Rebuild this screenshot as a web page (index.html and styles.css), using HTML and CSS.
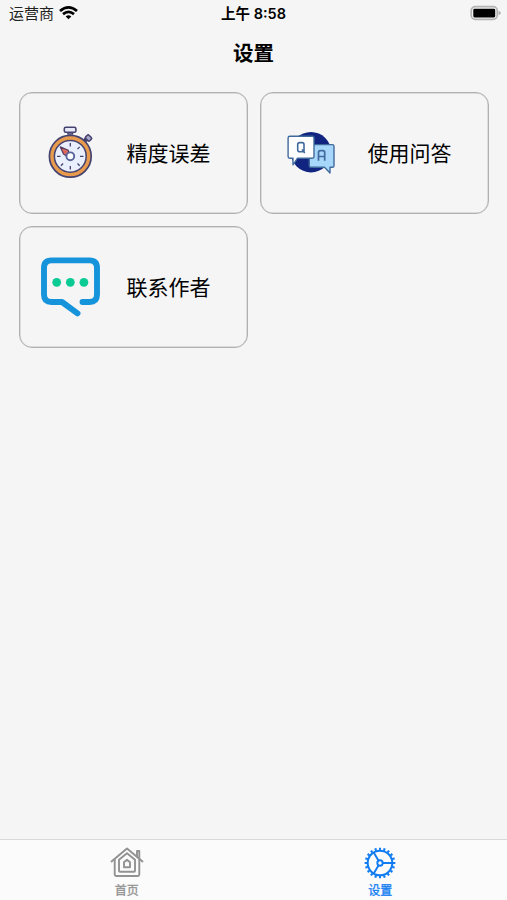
FILE: index.html
```html
<!DOCTYPE html>
<html lang="zh-CN">
<head>
<meta charset="utf-8">
<meta name="viewport" content="width=device-width, initial-scale=1">
<title>设置</title>
<link rel="stylesheet" href="styles.css">
</head>
<body>
<div class="app">
  <header class="status">
    <div class="carrier">
      <span>运营商</span>
      <svg width="20" height="15" viewBox="58 5 20 15" fill="none" stroke="#000" stroke-width="2.7">
        <path d="M60 11Q68.5 3.6 77 11"/>
        <path d="M63 14.1Q68.5 9.6 74 14.1"/>
        <path d="M65.7 16.4Q68.5 14.1 71.300 16.4L68.500 19.200Z" fill="#000" stroke="none"/>
      </svg>
    </div>
    <div class="time">上午 8:58</div>
    <svg class="battery" width="32" height="16" viewBox="470 5 32 16">
      <rect x="471.200" y="6.700" width="26" height="12.600" rx="4" fill="#f5f5f5" stroke="#b4b4b4" stroke-width="1.700"/>
      <rect x="473.300" y="8.700" width="21.900" height="8.700" rx="1.300"/>
      <path d="M498.500 10.800Q500.900 11.500 500.900 13Q500.900 14.500 498.500 15.200Z" fill="#b0b0b0"/>
    </svg>
  </header>
  <h1 class="title">设置</h1>
  <main class="grid">
    <section class="card">
      <svg class="icon" viewBox="41 123 60 60" fill="none">
        <path d="M68 134H72.500V130H68Z" fill="#e4e7f8" stroke="#454370" stroke-width="1.500"/>
        <rect x="64.300" y="127.300" width="11.600" height="5" rx="1.500" fill="#e8eafa" stroke="#454370" stroke-width="1.600"/>
        <path d="M84.500 141L87.500 138" stroke="#454370" stroke-width="4.500"/>
        <rect x="-2.800" y="-2.300" width="5.600" height="4.600" rx="1.200" transform="translate(88.500 138) rotate(45)" fill="#aaa8c8" stroke="#454370" stroke-width="1.600"/>
        <circle cx="70.300" cy="156.300" r="20.900" fill="#e89a4d" stroke="#454370" stroke-width="1.700"/>
        <circle cx="70.300" cy="156.300" r="15.900" fill="#e9effc" stroke="#454370" stroke-width="1.500"/>
        <path d="M70.300 143V146.500M70.300 166V169.500M57 156.300H60.500M80 156.300H83.500M79.700 146.900L77.500 149.100M60.900 165.700L63.100 163.500M79.700 165.700L77.500 163.500" stroke="#454370" stroke-width="1.300"/>
        <path d="M60.300 146.900L68.300 150.300L69 153L66.500 156L63.500 154Z" fill="#d9695c" stroke="#553b60" stroke-width="1.200" stroke-linejoin="round"/>
        <circle cx="70.300" cy="156.300" r="3.900" fill="#fff" stroke="#59649a" stroke-width="1.900"/>
      </svg>
      <span>精度误差</span>
    </section>
    <section class="card">
      <svg class="icon" viewBox="282 123 60 60" fill="none" stroke="#416a9c" stroke-width="1.400" stroke-linejoin="round">
        <circle cx="311" cy="152.200" r="20.200" fill="#11247f" stroke="none"/>
        <path d="M311 144.600H332.300Q334 144.600 334 146.300V165.700Q334 167.300 332.300 167.300H330V173L324.500 167.300H311Q309.300 167.300 309.300 165.700V144.600Z" fill="#a6d7fb"/>
        <path d="M289.800 136.300H312.300Q314 136.300 314 138V156.500Q314 158.200 312.300 158.200H297.500L293 164.800V158.200H289.800Q288.100 158.200 288.100 156.500V138Q288.100 136.300 289.800 136.300Z" fill="#fff"/>
        <path d="M297.700 144.500Q297.700 142.600 299.700 142.600H302Q304 142.600 304 144.500V151.700H299.700Q297.700 151.700 297.700 149.700ZM302 149.500L304.800 153" stroke-width="1.600"/>
        <path d="M318.500 160.800V152.500Q318.500 150.700 320.300 150.700H322.900Q324.700 150.700 324.700 152.500V160.800M318.500 156.500H324.700" stroke-width="1.700"/>
      </svg>
      <span>使用问答</span>
    </section>
    <section class="card">
      <svg class="icon" viewBox="41 257 60 60" fill="none">
        <path d="M82.500 302H89.500Q97 302 97 294.500V268Q97 260.400 89.500 260.400H51.500Q44 260.400 44 268V294.500Q44 302 51.500 302H62L77.500 313.300" stroke="#1594dc" stroke-width="5.900" stroke-linecap="round" stroke-linejoin="round"/>
        <g fill="#0acb94"><circle cx="56.700" cy="282.300" r="4.400"/><circle cx="70.300" cy="282.300" r="4.400"/><circle cx="83.900" cy="282.300" r="4.400"/></g>
      </svg>
      <span>联系作者</span>
    </section>
  </main>
  <nav class="tabs">
    <a class="tab">
      <svg width="36" height="34" viewBox="109 846 36 34" fill="none" stroke="#929292" stroke-width="1.900" stroke-linejoin="round" stroke-linecap="round">
        <path d="M111.500 861.500L127 848.500L142.500 861.500"/>
        <path d="M137 856.500V851H139.300V858.500"/>
        <path d="M114.700 859.500V874.500Q114.700 876 116.200 876H137.800Q139.300 876 139.300 874.500V859.500"/>
        <path d="M119 859.800L127 853.200L135 859.800V870.800Q135 871.800 134 871.800H120Q119 871.800 119 870.800Z"/>
        <path d="M124 862.300L127 859.700L130 862.300V867.200H124Z"/>
      </svg>
      <span>首页</span>
    </a>
    <a class="tab active">
      <svg width="36" height="34" viewBox="362 846 36 34" fill="none" stroke="#117cf2">
        <circle cx="380" cy="863" r="12.300" stroke-width="2"/>
        <circle cx="380" cy="863" r="14.100" stroke-width="2.500" pathLength="200" stroke-dasharray="4.600 5.400" stroke-dashoffset="2.300"/>
        <circle cx="380" cy="863" r="2.700" stroke-width="1.900"/>
        <path d="M382.700 863H392M378.600 860.700L373.700 852.500M378.600 865.300L373.700 873.500" stroke-width="1.900"/>
      </svg>
      <span>设置</span>
    </a>
  </nav>
</div>
</body>
</html>
```
FILE: styles.css
```css
* { box-sizing: border-box; }
body {
  margin: 0;
  background: #f5f5f5;
  color: #000;
  font-family: "Liberation Sans", "Noto Sans CJK SC", sans-serif;
}
.app { height: 900px; display: flex; flex-direction: column; }
svg { display: block; flex: none; }
.status {
  height: 27px;
  display: grid;
  grid-template-columns: 1fr auto 1fr;
  align-items: center;
  padding: 0 5px 0 9px;
}
.carrier { display: flex; align-items: center; gap: 4px; font-size: 15px; line-height: 27px; color: #222; }
.carrier svg { margin-top: -2px; }
.time {
  font: 600 14.5px/27px Inter, "Noto Sans CJK SC", sans-serif;
  white-space: nowrap;
  margin-right: 4px;
}
.battery { justify-self: end; margin-top: -2px; }
.title { margin: 0; height: 64px; font-size: 20.5px; font-weight: 700; line-height: 53px; text-align: center; }
.grid {
  flex: 1;
  display: grid;
  grid-template-columns: 1fr 1fr;
  grid-auto-rows: 122px;
  gap: 12px;
  padding: 0.5px 18px 0 19px;
  align-content: start;
}
.card {
  display: flex;
  align-items: center;
  gap: 26px;
  padding-left: 20.5px;
  border: 1px solid #b0b0b0;
  box-shadow: inset 0 0 0 0.5px #c4c4c4;
  border-radius: 13px;
  font-size: 21px;
  line-height: 30px;
}
.card span { padding-top: 2px; }
.icon { width: 60px; height: 60px; }
.tabs {
  height: 61px;
  display: grid;
  grid-template-columns: 1fr 1fr;
  background: #fbfbfb;
  border-top: 1px solid #d9d9d9;
}
.tab {
  display: flex;
  flex-direction: column;
  align-items: center;
  padding-top: 6px;
  font-size: 12px;
  line-height: 23px;
  color: #929292;
  -webkit-text-stroke: 0.3px currentColor;
}
.tab span { height: 20px; }
.active { color: #117cf2; }
```
